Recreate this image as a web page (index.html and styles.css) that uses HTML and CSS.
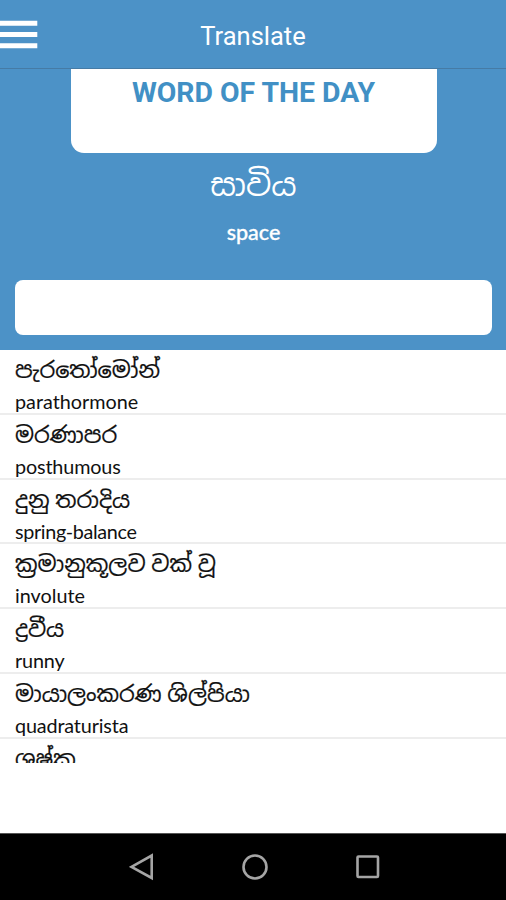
FILE: index.html
```html
<!DOCTYPE html>
<html lang="si">
<head>
<meta charset="utf-8">
<title>Translate</title>
<link rel="stylesheet" href="styles.css">
</head>
<body>
<header class="bar">
  <svg class="menu" width="38" height="30" viewBox="0 0 38 30"><path d="M0 4.3h37.3M0 15.6h37.3M0 26.7h37.3" stroke="#fff" stroke-width="5"/></svg>
  <h1 class="title">Translate</h1>
</header>
<section class="hero">
  <div class="card" lang="en">WORD OF THE DAY</div>
  <div class="daily">සාවිය</div>
  <div class="meaning" lang="en">space</div>
  <input class="search" type="text" aria-label="Search">
</section>
<main class="list">
  <div class="row"><div class="si">පැරතෝමෝන්</div><div class="en">parathormone</div></div>
  <div class="row"><div class="si">මරණාපර</div><div class="en snug">posthumous</div></div>
  <div class="row"><div class="si">දුනු තරාදිය</div><div class="en tight">spring-balance</div></div>
  <div class="row"><div class="si">ක්‍රමානුකූලව වක් වූ</div><div class="en">involute</div></div>
  <div class="row"><div class="si">ද්‍රවීය</div><div class="en snug">runny</div></div>
  <div class="row"><div class="si">මායාලංකරණ ශිල්පියා</div><div class="en snug">quadraturista</div></div>
  <div class="row"><div class="si">ශුෂ්ක</div></div>
</main>
<nav class="nav">
  <svg width="26" height="30" viewBox="0 0 26 30"><path d="M2.5 14.8L22.7 3.5V26Z"/></svg>
  <svg width="26" height="30" viewBox="0 0 26 30"><circle cx="13" cy="15" r="11.5"/></svg>
  <svg width="26" height="30" viewBox="0 0 26 30"><rect x="2.5" y="4.5" width="20.5" height="20.5" rx="1"/></svg>
</nav>
</body>
</html>
```

FILE: styles.css
```css
* { box-sizing: border-box; }
body {
  margin: 0;
  height: 900px;
  display: flex;
  flex-direction: column;
  overflow: hidden;
  background: #fff;
  color: #111;
  font-family: Lato, "Noto Sans Sinhala", "Noto Sans", sans-serif;
}
.bar {
  height: 69px;
  flex: none;
  display: grid;
  grid-template-columns: 38px 1fr 38px;
  align-items: center;
  background: #4c92c7;
  border-bottom: 1px solid #467ba5;
}
.menu { display: block; }
.title {
  margin: 4px 0 0;
  text-align: center;
  font: 400 25.5px/30px Roboto, sans-serif;
  color: #fff;
}
.hero {
  height: 281px;
  flex: none;
  display: flex;
  flex-direction: column;
  align-items: center;
  padding-left: 1px;
  background: #4c92c7;
  color: #fff;
}
.card {
  width: 366px;
  height: 84px;
  flex: none;
  padding-top: 8px;
  border-radius: 0 0 13px 13px;
  background: #fff;
  color: #4190c5;
  text-align: center;
  font: 700 28.4px/32px Roboto, sans-serif;
}
.daily { height: 60px; padding-top: 8px; font-size: 31.2px; line-height: 46px; white-space: nowrap; }
.meaning { height: 67px; padding-top: 5px; font-size: 21.5px; line-height: 28px; font-weight: 500; -webkit-text-stroke: .3px; }
.search {
  width: 477px;
  height: 55px;
  border: 0;
  border-radius: 8px;
  background: #fff;
}
.list { height: 413px; flex: none; overflow: hidden; }
.row {
  height: 64.75px;
  padding-left: 15px;
  border-bottom: 2px solid #ededed;
  white-space: nowrap;
}
.si { height: 39px; font-size: 22.4px; line-height: 39px; -webkit-text-stroke: .2px; }
.en { font-size: 19.8px; line-height: 25px; }
.snug { letter-spacing: -.15px; }
.tight { letter-spacing: -.35px; }
.nav {
  height: 67px;
  margin-top: auto;
  flex: none;
  display: flex;
  justify-content: center;
  gap: 87px;
  padding: 18px 0 0 3px;
  border-top: 1px solid #555;
  background: #000;
}
.nav svg { fill: none; stroke: #a5a5a5; stroke-width: 2.6; }
```
